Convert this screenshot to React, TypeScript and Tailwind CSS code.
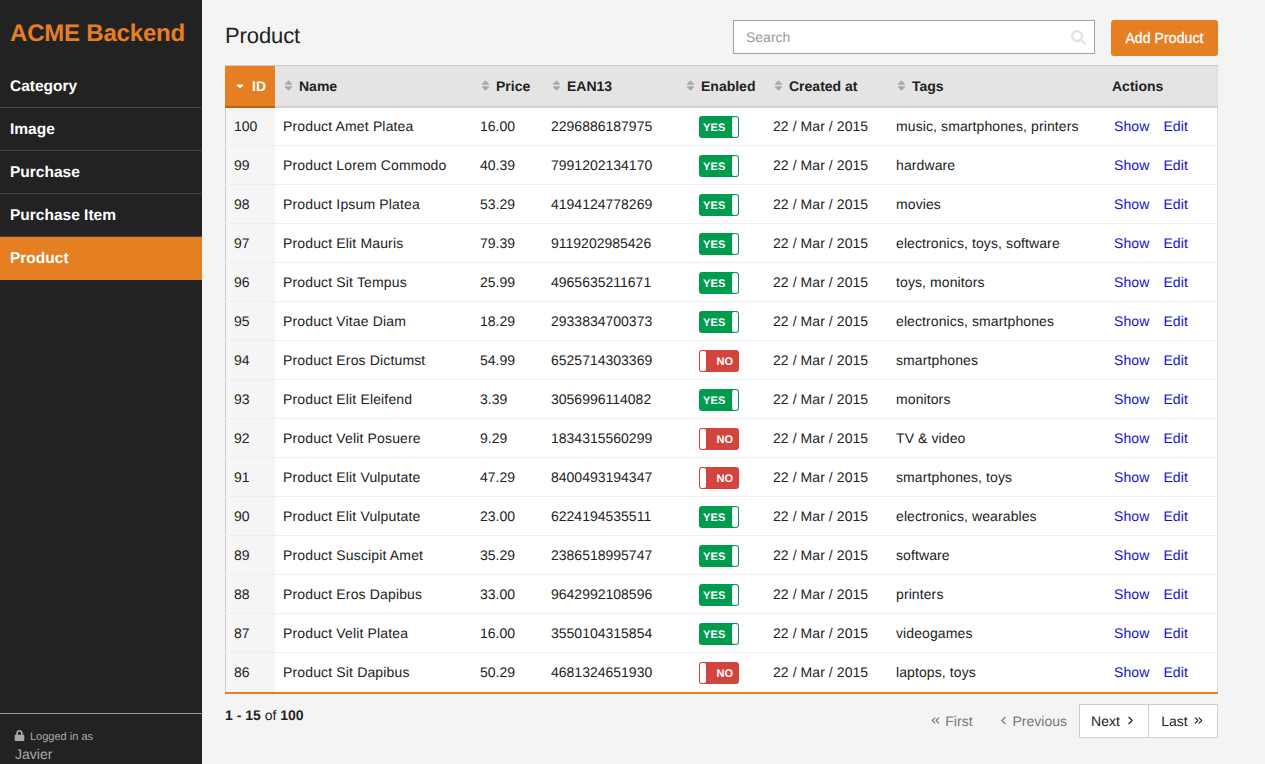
import React from 'react';
import { FaCaretDown, FaLock, FaSearch, FaSort } from 'react-icons/fa';
import { ChevronLeft, ChevronRight, ChevronsLeft, ChevronsRight } from 'lucide-react';

const navItems = ['Category', 'Image', 'Purchase', 'Purchase Item', 'Product'];

const products: [number, string, string, string, boolean, string][] = [
  [100, 'Product Amet Platea', '16.00', '2296886187975', true, 'music, smartphones, printers'],
  [99, 'Product Lorem Commodo', '40.39', '7991202134170', true, 'hardware'],
  [98, 'Product Ipsum Platea', '53.29', '4194124778269', true, 'movies'],
  [97, 'Product Elit Mauris', '79.39', '9119202985426', true, 'electronics, toys, software'],
  [96, 'Product Sit Tempus', '25.99', '4965635211671', true, 'toys, monitors'],
  [95, 'Product Vitae Diam', '18.29', '2933834700373', true, 'electronics, smartphones'],
  [94, 'Product Eros Dictumst', '54.99', '6525714303369', false, 'smartphones'],
  [93, 'Product Elit Eleifend', '3.39', '3056996114082', true, 'monitors'],
  [92, 'Product Velit Posuere', '9.29', '1834315560299', false, 'TV & video'],
  [91, 'Product Elit Vulputate', '47.29', '8400493194347', false, 'smartphones, toys'],
  [90, 'Product Elit Vulputate', '23.00', '6224194535511', true, 'electronics, wearables'],
  [89, 'Product Suscipit Amet', '35.29', '2386518995747', true, 'software'],
  [88, 'Product Eros Dapibus', '33.00', '9642992108596', true, 'printers'],
  [87, 'Product Velit Platea', '16.00', '3550104315854', true, 'videogames'],
  [86, 'Product Sit Dapibus', '50.29', '4681324651930', false, 'laptops, toys'],
];

function Toggle({ on }: { on: boolean }) {
  if (on) {
    return (
      <div className="mt-[2px] flex h-[22px] w-10 items-center justify-between rounded-[3px] bg-[#009c4e] pl-1 pr-px text-[11px] font-bold text-white">
        <span className="pt-1 tracking-[0.2px]">YES</span>
        <span className="h-5 w-[6px] rounded-[2px] bg-white" />
      </div>
    );
  }
  return (
    <div className="mt-[2px] flex h-[22px] w-10 items-center justify-between rounded-[3px] bg-[#d2453f] pl-px pr-[6px] text-[11px] font-bold text-white">
      <span className="h-5 w-[6px] rounded-[2px] bg-white" />
      <span className="pt-1">NO</span>
    </div>
  );
}

function SortHead({ label, width }: { label: string; width: string }) {
  return (
    <th className={`${width} px-2 text-left font-bold`}>
      <span className="flex items-center gap-[5px]">
        <FaSort size={13} className="ml-[-1px] mr-[-1px] text-[#a8a8a8]" />
        {label}
      </span>
    </th>
  );
}

export default function App() {
  return (
    <div className="flex h-screen overflow-hidden bg-[#f4f4f4] font-['Liberation_Sans',Arial,sans-serif] text-sm text-[#222] [text-rendering:geometricPrecision]">
      <aside className="flex w-[202px] shrink-0 flex-col bg-[#222]">
        <div className="flex h-[65px] items-center pl-[10px] pt-[2px] text-2xl font-bold tracking-[-0.2px] text-[#e67e22]">
          ACME Backend
        </div>
        <nav className="flex flex-col">
          {navItems.map((item) => (
            <a
              key={item}
              className={`flex h-[43px] items-center border-b pl-[10px] text-[15.5px] font-bold text-white ${
                item === 'Product' ? 'border-[#e67e22] bg-[#e67e22] pt-[2px]' : 'border-[#444] pt-[3px]'
              }`}
            >
              {item}
            </a>
          ))}
        </nav>
        <div className="mt-auto h-[51px] border-t border-[#999] pl-[15px] pt-[14px] text-[#aaa]">
          <div className="flex items-center gap-[5px] text-[11px] leading-[16px]">
            <FaLock size={11} className="ml-[-1px] mt-[-2px]" />
            <span className="pt-px">Logged in as</span>
          </div>
          <div className="leading-[18px]">Javier</div>
        </div>
      </aside>

      <main className="flex-1 pl-[23px] pr-[47px] pt-5">
        <div className="flex h-[45px] items-start">
          <h1 className="mr-auto pt-px text-[22px] leading-[30px] tracking-[-0.1px]">Product</h1>
          <div className="flex h-[34px] w-[362px] items-center justify-between border border-[#a89f96] bg-white pl-3 pr-[8px] text-[#999]">
            Search
            <FaSearch size={15} className="text-[#e4e4e4]" />
          </div>
          <button
            type="button"
            className="ml-4 h-9 w-[107px] rounded-[3px] bg-[#e67e22] text-center tracking-[0.1px] text-white [-webkit-text-stroke:0.3px_white]"
          >
            Add Product
          </button>
        </div>

        <table className="w-[993px] table-fixed border-collapse border-r border-[#ddd] bg-white">
          <thead>
            <tr className="h-[41px] border-b-2 border-[#d4d1c8] border-t border-t-[#ccc] bg-[#e4e4e4]">
              <th className="w-[50px] border-b-2 border-[#b86314] bg-[#e67e22] text-white">
                <span className="flex items-center justify-center gap-[6px] font-bold">
                  <FaCaretDown size={12} />
                  ID
                </span>
              </th>
              <SortHead label="Name" width="w-[197px]" />
              <SortHead label="Price" width="w-[71px]" />
              <SortHead label="EAN13" width="w-[134px]" />
              <SortHead label="Enabled" width="w-[88px]" />
              <SortHead label="Created at" width="w-[123px]" />
              <SortHead label="Tags" width="w-[216px]" />
              <th className="px-2 text-left font-bold">Actions</th>
            </tr>
          </thead>
          <tbody>
            {products.map(([id, name, price, ean, enabled, tags], i) => (
              <tr key={id} className={`h-[39px] ${i < products.length - 1 ? 'border-b border-[#eee]' : ''}`}>
                <td className="bg-[#f5f5f5] pl-[9px] shadow-[inset_1px_0_0_#ccc]">{id}</td>
                <td className="px-2 tracking-[0.15px]">{name}</td>
                <td className="px-2">{price}</td>
                <td className="px-2">{ean}</td>
                <td className="pl-[22px]">
                  <Toggle on={enabled} />
                </td>
                <td className="px-2 tracking-[0.07px]">22 / Mar / 2015</td>
                <td className="px-2 tracking-[0.1px]">{tags}</td>
                <td className="pl-[10px] tracking-[0.1px] text-[#1111cc]">
                  <a className="mr-[14px]">Show</a>
                  <a>Edit</a>
                </td>
              </tr>
            ))}
          </tbody>
        </table>

        <div className="flex items-start justify-between border-t-2 border-[#e67e22] pt-[10px]">
          <div className="mt-px leading-[20px]">
            <b>1 - 15</b> of <b>100</b>
          </div>
          <div className="flex items-center text-[#777]">
            <a className="mr-6 flex items-center gap-[3px]">
              <ChevronsLeft size={13} strokeWidth={2} />
              First
            </a>
            <a className="mr-3 flex items-center gap-[3px]">
              <ChevronLeft size={13} strokeWidth={2} />
              Previous
            </a>
            <a className="flex h-[34px] w-[70px] items-center justify-center gap-[4px] border border-[#d0cec6] bg-white text-[#222]">
              Next
              <ChevronRight size={13} strokeWidth={2} />
            </a>
            <a className="ml-[-1px] flex h-[34px] w-[70px] items-center justify-center gap-[4px] border border-[#d0cec6] bg-white text-[#222]">
              Last
              <ChevronsRight size={13} strokeWidth={2} />
            </a>
          </div>
        </div>
      </main>
    </div>
  );
}
